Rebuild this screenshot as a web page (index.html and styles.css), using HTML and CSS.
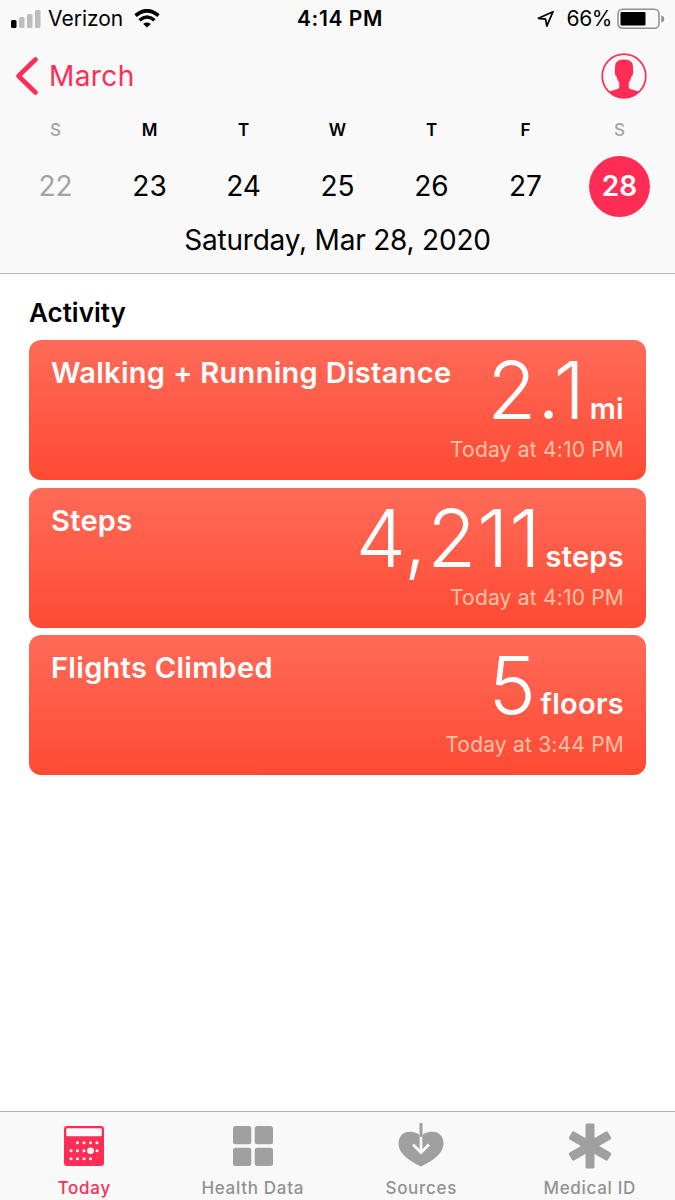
FILE: index.html
```html
<!DOCTYPE html>
<html lang="en">
<head>
  <meta charset="UTF-8" />
  <meta name="viewport" content="width=device-width, initial-scale=1.0"/>
  <title>Health</title>
  <link rel="stylesheet" href="styles.css">
</head>
<body>

    <header class="header">
        <div class="status">
            <div class="status-left">
                <svg class="signal" width="30" height="18" viewBox="0 0 30 18">
                    <rect x="0" y="10" width="5.5" height="8" rx="1.5" fill="#000"/>
                    <rect x="8" y="7" width="5.5" height="11" rx="1.5" fill="#bdbdbd"/>
                    <rect x="16" y="4" width="5.5" height="14" rx="1.5" fill="#bdbdbd"/>
                    <rect x="24" y="0" width="5.5" height="18" rx="1.5" fill="#bdbdbd"/>
                </svg>
                <span class="carrier">Verizon</span>
                <svg class="wifi" width="26" height="19" viewBox="0 0 26 19">
                    <path d="M1.5 6.6Q13-3 24.5 6.6" fill="none" stroke="#000" stroke-width="3.7"/>
                    <path d="M5.5 11.2Q13 5 20.5 11.2" fill="none" stroke="#000" stroke-width="3.4"/>
                    <path d="M9.2 14.9Q13 12 16.8 14.9L13 18.6Z" fill="#000"/>
                </svg>
            </div>
            <span class="time">4:14 PM</span>
            <div class="status-right">
                <svg class="location" width="18" height="18" viewBox="0 0 18 18">
                    <path d="M1.5 8.3L16 1.7L9.8 16.2L8.6 9.2Z" fill="none" stroke="#000" stroke-width="1.7" stroke-linejoin="round"/>
                </svg>
                <span class="percent">66%</span>
                <svg class="battery" width="48" height="22" viewBox="0 0 48 22">
                    <rect x="1" y="1.2" width="41" height="19" rx="4.5" fill="none" stroke="#8f8f8f" stroke-width="1.5"/>
                    <rect x="3.5" y="4" width="25" height="13.5" rx="1" fill="#000"/>
                    <path d="M44.3 7.5Q47.2 8.3 47.2 11T44.3 14.5Z" fill="#8f8f8f"/>
                </svg>
            </div>
        </div>

        <nav class="nav">
            <a class="back">
                <svg width="24" height="40" viewBox="0 0 24 40">
                    <path d="M20.5 3.5L3.5 20L20.5 36.5" fill="none" stroke="#ff2d55" stroke-width="4.6" stroke-linecap="round" stroke-linejoin="round"/>
                </svg>
                <span>March</span>
            </a>
            <svg class="profile" width="46" height="46" viewBox="0 0 46 46">
                <circle cx="23" cy="23" r="21.8" fill="none" stroke="#ff2d55" stroke-width="1.7"/>
                <path d="M8 38.8C12 37 16.5 36.7 18.2 34.8V29.5Q16 26.5 15.5 23.5Q13.6 22.5 13.9 18L14.2 12Q15 6.5 23 6.5T31.8 12L32.1 18Q32.4 22.5 30.5 23.5Q30 26.5 27.8 29.5V34.8C29.5 36.7 34 37 38 38.8Q32 44.8 23 44.8T8 38.8Z" fill="#ff2d55"/>
            </svg>
        </nav>

        <div class="week">
            <div class="day weekend"><span class="letter">S</span><span class="number">22</span></div>
            <div class="day"><span class="letter">M</span><span class="number">23</span></div>
            <div class="day"><span class="letter">T</span><span class="number">24</span></div>
            <div class="day"><span class="letter">W</span><span class="number">25</span></div>
            <div class="day"><span class="letter">T</span><span class="number">26</span></div>
            <div class="day"><span class="letter">F</span><span class="number">27</span></div>
            <div class="day weekend"><span class="letter">S</span><span class="number selected">28</span></div>
        </div>

        <div class="date">Saturday, Mar 28, 2020</div>
    </header>

    <main class="content">
        <h2>Activity</h2>

        <div class="card">
            <span class="title">Walking + Running Distance</span>
            <div class="reading">
                <div class="amount"><span class="value">2.1</span><span class="unit">mi</span></div>
                <span class="when">Today at 4:10 PM</span>
            </div>
        </div>

        <div class="card">
            <span class="title">Steps</span>
            <div class="reading">
                <div class="amount"><span class="value">4,211</span><span class="unit">steps</span></div>
                <span class="when">Today at 4:10 PM</span>
            </div>
        </div>

        <div class="card">
            <span class="title">Flights Climbed</span>
            <div class="reading">
                <div class="amount"><span class="value">5</span><span class="unit">floors</span></div>
                <span class="when">Today at 3:44 PM</span>
            </div>
        </div>
    </main>

    <footer class="tabs">
        <a class="tab active">
            <svg width="46" height="46" viewBox="0 0 46 46">
                <rect x="3" y="3" width="40" height="40" rx="3" fill="#ff2d55"/>
                <rect x="5.3" y="5.3" width="35.4" height="8" rx="1" fill="#f9f9f9"/>
                <g fill="#fff">
                    <circle cx="16.5" cy="19.7" r="1.5"/><circle cx="23" cy="19.7" r="1.5"/><circle cx="29.5" cy="19.7" r="1.5"/><circle cx="36" cy="19.7" r="1.5"/>
                    <circle cx="10" cy="27.7" r="1.5"/><circle cx="16.5" cy="27.7" r="1.5"/><circle cx="23" cy="27.7" r="1.5"/><circle cx="29.5" cy="27.7" r="3.3"/><circle cx="36" cy="27.7" r="1.5"/>
                    <circle cx="10" cy="35.7" r="1.5"/><circle cx="16.5" cy="35.7" r="1.5"/><circle cx="23" cy="35.7" r="1.5"/><circle cx="29.5" cy="35.7" r="1.5"/>
                </g>
            </svg>
            <span>Today</span>
        </a>
        <a class="tab">
            <svg width="46" height="46" viewBox="0 0 46 46" fill="#a0a0a0">
                <rect x="3" y="3" width="18.3" height="18.3" rx="2.5"/>
                <rect x="24.7" y="3" width="18.3" height="18.3" rx="2.5"/>
                <rect x="3" y="24.7" width="18.3" height="18.3" rx="2.5"/>
                <rect x="24.7" y="24.7" width="18.3" height="18.3" rx="2.5"/>
            </svg>
            <span>Health Data</span>
        </a>
        <a class="tab">
            <svg width="46" height="46" viewBox="0 0 46 46">
                <path d="M23 43.5C15 39.5 .5 32 .5 20.5C.5 13 5.5 8.7 11 8.7C17 8.7 20.5 10.5 23 13.5C25.5 10.5 29 8.7 35 8.7C40.5 8.7 45.5 13 45.5 20.5C45.5 32 31 39.5 23 43.5Z" fill="#a0a0a0"/>
                <path d="M23 12V29M15 21.5L23 29.5L31 21.5" fill="none" stroke="#f9f9f9" stroke-width="2.7"/>
                <path d="M23 .5V12.5" stroke="#a0a0a0" stroke-width="3" stroke-linecap="round"/>
            </svg>
            <span>Sources</span>
        </a>
        <a class="tab">
            <svg width="46" height="46" viewBox="0 0 46 46" fill="#a0a0a0">
                <rect x="18.5" y="0.5" width="9" height="45" rx="1.5"/>
                <rect x="18.5" y="0.5" width="9" height="45" rx="1.5" transform="rotate(60 23 23)"/>
                <rect x="18.5" y="0.5" width="9" height="45" rx="1.5" transform="rotate(-60 23 23)"/>
            </svg>
            <span>Medical ID</span>
        </a>
    </footer>

</body>
</html>
```

FILE: styles.css
```css
* {
  box-sizing: border-box;
}

body {
  margin: 0;
  height: 1200px;
  display: flex;
  flex-direction: column;
  background: #fff;
  color: #000;
  font-family: Inter, "Liberation Sans", sans-serif;
  white-space: nowrap;
}

svg {
  display: block;
  flex: none;
}

.header {
  height: 274px;
  background: #f9f9f9;
  border-bottom: 1px solid #b8b8b8;
}

/* status bar */
.status {
  height: 37px;
  padding: 0 10px 0 11px;
  display: grid;
  grid-template-columns: 1fr auto 1fr;
  align-items: center;
  font-size: 21px;
}

.status-left, .status-right {
  display: flex;
  align-items: center;
}

.status-right {
  justify-content: flex-end;
}

.carrier {
  margin: 0 11px 0 7px;
}

.time {
  padding-left: 4px;
  font-weight: 600;
  letter-spacing: 0.6px;
}

.percent {
  margin: 0 5px 0 12px;
  letter-spacing: -0.4px;
}

/* back link and profile */
.nav {
  height: 77px;
  padding: 0 28px 0 15px;
  display: flex;
  align-items: center;
  justify-content: space-between;
}

.back {
  display: flex;
  align-items: center;
  gap: 10px;
  color: #ff2d55;
  font-size: 28px;
  letter-spacing: 0.4px;
}

/* week strip */
.week {
  padding: 1px 8.5px 0;
  display: grid;
  grid-template-columns: repeat(7, 1fr);
}

.day {
  display: flex;
  flex-direction: column;
  align-items: center;
}

.letter {
  height: 41px;
  line-height: 31px;
  font-size: 17px;
  font-weight: 600;
}

.number {
  width: 61px;
  height: 61px;
  line-height: 61px;
  border-radius: 50%;
  text-align: center;
  font-size: 28px;
}

.weekend {
  color: #a3a3a3;
}

.weekend .letter {
  font-weight: 500;
}

.selected {
  background: #ff2d55;
  color: #fff;
  font-weight: 600;
}

.date {
  line-height: 46px;
  text-align: center;
  font-size: 28px;
  letter-spacing: -0.2px;
}

/* cards */
.content {
  flex: 1;
  padding: 0 29px;
}

h2 {
  margin: 0;
  height: 66px;
  padding-top: 22px;
  line-height: 34px;
  font-size: 26px;
  font-weight: 600;
}

.card {
  height: 140px;
  margin-bottom: 7.5px;
  padding: 0 22px;
  display: flex;
  justify-content: space-between;
  border-radius: 12px;
  background: linear-gradient(#ff6b59, #ff4a33);
  color: #fff;
}

.title {
  min-width: 0;
  padding-top: 14px;
  line-height: 38px;
  font-size: 29px;
  font-weight: 600;
  letter-spacing: 0.3px;
}

.reading {
  flex: none;
  display: flex;
  flex-direction: column;
  align-items: flex-end;
}

.amount {
  display: flex;
  align-items: baseline;
  height: 94px;
  line-height: 100px;
}

.value {
  font-size: 80px;
  font-weight: 300;
  letter-spacing: 0.7px;
}

.unit {
  margin-left: 4px;
  font-size: 29px;
  font-weight: 600;
  letter-spacing: 0.3px;
}

.when {
  line-height: 32px;
  color: #ffc2a8;
  font-size: 21px;
  letter-spacing: 0.2px;
}

/* tab bar */
.tabs {
  height: 89px;
  padding: 11px 1px 0 0;
  display: grid;
  grid-template-columns: repeat(4, 1fr);
  border-top: 1px solid #b2b2b2;
  background: #f9f9f9;
}

.tab {
  display: flex;
  flex-direction: column;
  align-items: center;
  color: #929292;
  font-size: 17px;
  font-weight: 500;
  letter-spacing: 0.7px;
}

.tab span {
  margin-top: 7px;
  line-height: 24px;
}

.active {
  color: #ff2d55;
}
```
